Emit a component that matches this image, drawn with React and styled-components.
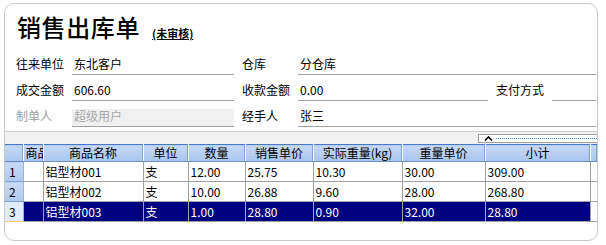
import styled, { createGlobalStyle } from "styled-components";

const GlobalStyle = createGlobalStyle`
    html, body {
        margin: 0;
        padding: 0;
        background: #ffffff;
    }
    body {
        font-family: "Noto Sans CJK SC", "DejaVu Sans", sans-serif;
        font-size: 12px;
        color: #000;
    }
`;

const Panel = styled.div`
    box-sizing: border-box;
    margin: 3px 8px 0 4px;
    width: 594px;
    height: 238px;
    border: 1px solid #c8c8c8;
    border-radius: 10px;
    overflow: hidden;
    display: flex;
    flex-direction: column;
`;

const TitleBar = styled.div`
    height: 45px;
    box-sizing: border-box;
    padding: 5px 0 0 12px;
    display: flex;
    align-items: flex-end;
    gap: 12px;
`;

const Title = styled.h1`
    margin: 0 0 7px 0;
    font-size: 24px;
    line-height: 30px;
    font-weight: 500;
    letter-spacing: 0.6px;
`;

const Status = styled.span`
    margin-bottom: 10px;
    font-size: 11px;
    line-height: 12px;
    font-weight: 700;
    text-decoration: underline;
`;

const Form = styled.div`
    display: flex;
    flex-direction: column;
    padding-left: 11px;
`;

const Row = styled.div`
    display: flex;
    align-items: flex-start;
    height: 26px;
    box-sizing: border-box;
    padding-top: 8px;
`;

const Label = styled.span`
    width: 56px;
    margin-left: ${p => p.$gap || 0}px;
    line-height: 14px;
    color: ${p => (p.$muted ? "#a0a0a0" : "#000")};
`;

const Field = styled.div`
    box-sizing: border-box;
    width: ${p => p.$w}px;
    height: 18px;
    padding-left: 2px;
    line-height: 14px;
    border-bottom: 1px solid #a0a0a0;
    background: ${p => (p.$muted ? "#f0f0f0" : "transparent")};
    color: ${p => (p.$muted ? "#a8a8a8" : "#000")};
`;

const Splitter = styled.div`
    margin-top: 4px;
    height: 12px;
    border-top: 1px solid #d0d0d0;
    background: #f0f0f0;
    display: flex;
    justify-content: flex-end;
    align-items: center;
`;

const Collapse = styled.div`
    box-sizing: border-box;
    width: 120px;
    height: 9px;
    margin-right: -1px;
    border: 1px solid #a0a0a0;
    background: #fff;
    display: flex;
    align-items: center;
    gap: 3px;
    padding-left: 5px;
`;

const Dots = styled.div`
    flex: 1;
    border-top: 1px dotted #3c8ce6;
`;

const Grid = styled.table`
    border-collapse: collapse;
    table-layout: fixed;
    width: 592px;
    border-top: 1px solid #4a78c8;
`;

const Th = styled.th`
    box-sizing: border-box;
    width: ${p => p.$w}px;
    height: 16px;
    padding: 0 0 0 ${p => (p.$left ? 2 : 0)}px;
    font-weight: 400;
    font-size: 12px;
    line-height: 16px;
    text-align: ${p => (p.$left ? "left" : "center")};
    white-space: nowrap;
    overflow: hidden;
    text-overflow: clip;
    background: linear-gradient(#c4d8f4, #aac6ee);
    border-right: 1px solid #fff;
    box-shadow: inset -1px 0 0 #7fa2d8;
    border-bottom: 1px solid #6f8fc4;
`;

const RowHead = styled.td`
    height: 19px;
    padding: 0 0 0 4px;
    font-size: 12px;
    background: ${p => (p.$sel ? "#e2edfb" : "linear-gradient(#c8dbf5, #aec8ee)")};
    border-bottom: 1px solid ${p => (p.$sel ? "#f6c88c" : "#7f9fd0")};
    border-right: 1px solid #9ab4dc;
`;

const Td = styled.td`
    height: 19px;
    padding: 0 0 0 2px;
    font-size: 12px;
    white-space: nowrap;
    overflow: hidden;
    background: ${p => (p.$sel ? "#000080" : "#fff")};
    color: ${p => (p.$sel ? "#fff" : "#000")};
    border-right: 1px solid #a0a0a0;
    border-bottom: 1px solid #a0a0a0;
`;

const Filler = styled.td`
    border-bottom: 1px solid #a0a0a0;
    background: #fff;
`;

const columns = [
    { title: "", w: 18 },
    { title: "商品", w: 20, left: true },
    { title: "商品名称", w: 100 },
    { title: "单位", w: 45 },
    { title: "数量", w: 57 },
    { title: "销售单价", w: 68 },
    { title: "实际重量(kg)", w: 89 },
    { title: "重量单价", w: 83 },
    { title: "小计", w: 105 },
    { title: "", w: 7 },
];

const rows = [
    ["铝型材001", "支", "12.00", "25.75", "10.30", "30.00", "309.00"],
    ["铝型材002", "支", "10.00", "26.88", "9.60", "28.00", "268.80"],
    ["铝型材003", "支", "1.00", "28.80", "0.90", "32.00", "28.80"],
];

export default function App() {
    return (
        <>
            <GlobalStyle />
            <Panel>
                <TitleBar>
                    <Title>销售出库单</Title>
                    <Status>(未审核)</Status>
                </TitleBar>
                <Form>
                    <Row>
                        <Label>往来单位</Label>
                        <Field $w={162}>东北客户</Field>
                        <Label $gap={8}>仓库</Label>
                        <Field $w={298}>分仓库</Field>
                    </Row>
                    <Row>
                        <Label>成交金额</Label>
                        <Field $w={162}>606.60</Field>
                        <Label $gap={8}>收款金额</Label>
                        <Field $w={190}>0.00</Field>
                        <Label $gap={8}>支付方式</Label>
                        <Field $w={44}></Field>
                    </Row>
                    <Row>
                        <Label $muted>制单人</Label>
                        <Field $w={162} $muted>超级用户</Field>
                        <Label $gap={8}>经手人</Label>
                        <Field $w={298}>张三</Field>
                    </Row>
                </Form>
                <Splitter>
                    <Collapse>
                        <svg width="9" height="5" viewBox="0 0 9 5">
                            <path d="M1 4.5 L4.5 1 L8 4.5" fill="none" stroke="#000" strokeWidth="1.6" />
                        </svg>
                        <Dots />
                    </Collapse>
                </Splitter>
                <Grid>
                    <thead>
                        <tr>
                            {columns.map((c, i) => (
                                <Th key={i} $w={c.w} $left={c.left}>{c.title}</Th>
                            ))}
                        </tr>
                    </thead>
                    <tbody>
                        {rows.map((r, i) => {
                            const sel = i === rows.length - 1;
                            return (
                                <tr key={i}>
                                    <RowHead $sel={sel}>{i + 1}</RowHead>
                                    <Td $sel={sel}></Td>
                                    {r.map((v, j) => (
                                        <Td key={j} $sel={sel}>{v}</Td>
                                    ))}
                                    <Filler />
                                </tr>
                            );
                        })}
                    </tbody>
                </Grid>
            </Panel>
        </>
    );
}
